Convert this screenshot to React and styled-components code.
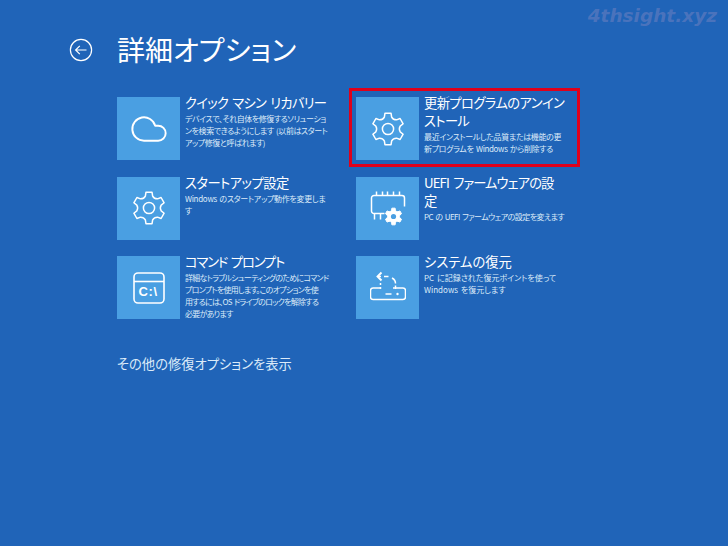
import React from 'react'
import styled, { createGlobalStyle } from 'styled-components'
import { Cloud } from 'lucide-react'

const GlobalStyle = createGlobalStyle`
  html, body {
    margin: 0;
    background: #2064b8;
  }
  body {
    font-family: "Noto Sans CJK JP", "Noto Sans", sans-serif;
    font-feature-settings: "palt";
    color: #fff;
  }
`

const Page = styled.div`
  position: relative;
  width: 728px;
  height: 546px;
  overflow: hidden;
  box-sizing: border-box;
  padding: 29px 0 0 69px;
  background: #2064b8;
`
const Watermark = styled.div`
  position: absolute;
  top: 5px;
  right: 11px;
  font-family: "DejaVu Sans", sans-serif;
  font-style: italic;
  font-weight: 700;
  font-size: 18.5px;
  color: rgba(128, 135, 195, 0.45);
`
const Header = styled.div`
  display: flex;
  align-items: center;
  gap: 24px;
  height: 42px;
`
const BackButton = styled.svg`
  width: 24px;
  height: 24px;
  flex: none;
`
const Title = styled.h1`
  margin: -2px 0 0;
  font-size: 28px;
  font-weight: 400;
  line-height: 42px;
`
const Grid = styled.div`
  display: grid;
  grid-template-columns: 239px 239px;
  grid-auto-rows: 63px;
  row-gap: 16.5px;
  margin: 26px 0 0 48px;
`
const Card = styled.div`
  position: relative;
  display: flex;
  gap: 5px;
  ${props => props.$highlighted && `
    &::after {
      content: "";
      position: absolute;
      top: -9px;
      right: 15px;
      bottom: -7px;
      left: -7px;
      border: 3px solid #e0001b;
    }
  `}
`
const Tile = styled.div`
  width: 63px;
  height: 63px;
  flex: none;
  display: flex;
  align-items: center;
  justify-content: center;
  background: #4a9fe2;
`
const CardText = styled.div`
  margin-top: -3px;
  white-space: nowrap;
`
const CardTitle = styled.div`
  font-size: 13.3px;
  line-height: 18px;
  color: #fff;
  word-spacing: 2px;
  letter-spacing: ${props => props.$tracking || 0}px;
`
const CardDesc = styled.div`
  margin-top: 1px;
  font-size: 8px;
  line-height: 12px;
  color: #dcebf9;
  word-spacing: 1px;
  letter-spacing: ${props => props.$tracking || 0}px;
`
const MoreLink = styled.div`
  margin: 35px 0 0 48px;
  font-size: 13.3px;
  line-height: 20px;
  color: #dcebf9;
`
const IconLabel = styled.text`
  font-family: "Liberation Sans", sans-serif;
  font-size: 13px;
  font-weight: 700;
  letter-spacing: 0.6px;
  fill: #fff;
  stroke: none;
`

// six flat teeth round a centre, top tooth pointing straight up
const gearPath = (cx, cy, outer, base, valley) => {
  const at = (r, deg) => {
    const rad = (deg * Math.PI) / 180
    return `${(cx + r * Math.cos(rad)).toFixed(2)} ${(cy + r * Math.sin(rad)).toFixed(2)}`
  }
  let d = ''
  for (let i = 0; i < 6; i++) {
    const a = i * 60 - 90
    d += `${i === 0 ? 'M' : 'L'}${at(base, a - 17)} L${at(outer, a - 11)} L${at(outer, a + 11)} L${at(base, a + 17)} Q${at(valley, a + 30)} `
    d += `${at(base, a + 43)} `
  }
  return d + 'Z'
}

const BackIcon = () => (
  <BackButton viewBox="0 0 24 24" fill="none" stroke="#fff" strokeWidth="1.2">
    <circle cx="12" cy="12" r="10.6" />
    <path d="M17.5 12H6.8M10.8 7.8 6.6 12l4.2 4.2" />
  </BackButton>
)

const GearIcon = () => (
  <svg width="36" height="36" viewBox="0 0 36 36" fill="none" stroke="#fff" strokeWidth="1.5" strokeLinejoin="round">
    <path d={gearPath(18, 18, 16, 12.5, 10.5)} />
    <circle cx="18" cy="18" r="5.6" />
  </svg>
)

const ChipIcon = () => (
  <svg width="36" height="36" viewBox="0 0 36 36" fill="none" stroke="#fff" strokeWidth="1.5">
    <path d="M14.5 23.5H4A2.5 2.5 0 0 1 1.5 21V8A2.5 2.5 0 0 1 4 5.5h28A2.5 2.5 0 0 1 34.5 8v8.5" />
    <path d="M6.5 1.5v4M12.5 1.5v4M17.5 1.5v4M23.5 1.5v4M29.5 1.5v4M4.5 23.5v6M10.5 23.5v6" />
    <path fill="#fff" strokeWidth="1" strokeLinejoin="round" d={gearPath(23.5, 26.5, 8.5, 6.5, 5.5)} />
    <circle cx="23.5" cy="26.5" r="2.6" fill="#4a9fe2" stroke="none" />
  </svg>
)

const CommandIcon = () => (
  <svg width="32" height="32" viewBox="0 0 32 32" fill="none" stroke="#fff" strokeWidth="1.6">
    <rect x="1" y="1" width="30" height="30" rx="4" />
    <path d="M1 9.5h30" />
    <IconLabel x="5.5" y="24">C:\</IconLabel>
  </svg>
)

const RestoreIcon = () => (
  <svg width="36" height="36" viewBox="0 0 36 36" fill="none" stroke="#fff" strokeWidth="1.5">
    <path d="M11 18H3a2.5 2.5 0 0 0-2.5 2.5V27A2.5 2.5 0 0 0 3 29.5h30a2.5 2.5 0 0 0 2.5-2.5v-6.5A2.5 2.5 0 0 0 33 18H23" />
    <path d="M15.5 24h6" />
    <circle cx="27.5" cy="24" r="1.2" fill="#fff" stroke="none" />
    <path d="M11.5 2.5 7.5 6.5l4 4" strokeWidth="1.9" />
    <path d="M8 6.5h3M14 6.5h4.5M22 8c2 1 3.5 3 3.5 5.5M25.5 15.5V19M10.5 13v2M10.5 17v2" />
  </svg>
)

const options = [
  {
    icon: <Cloud size={40} strokeWidth={1.15} color="#fff" />,
    title: ['クイック マシン リカバリー'],
    titleTracking: -0.75,
    desc: ['デバイスで、それ自体を修復するソリューショ', 'ンを検索できるようにします (以前はスタート', 'アップ修復と呼ばれます)'],
    descTracking: -0.45,
  },
  {
    icon: <GearIcon />,
    title: ['更新プログラムのアンイン', 'ストール'],
    titleTracking: -0.6,
    desc: ['最近インストールした品質または機能の更', '新プログラムを Windows から削除する'],
    descTracking: -0.35,
    highlighted: true,
  },
  {
    icon: <GearIcon />,
    title: ['スタートアップ設定'],
    titleTracking: -0.55,
    desc: ['Windows のスタートアップ動作を変更しま', 'す'],
    descTracking: -0.3,
  },
  {
    icon: <ChipIcon />,
    title: ['UEFI ファームウェアの設', '定'],
    titleTracking: -0.9,
    desc: ['PC の UEFI ファームウェアの設定を変えます'],
    descTracking: -0.55,
  },
  {
    icon: <CommandIcon />,
    title: ['コマンド プロンプト'],
    titleTracking: -1.2,
    desc: ['詳細なトラブルシューティングのためにコマンド', 'プロンプトを使用します。このオプションを使', '用するには、OS ドライブのロックを解除する', '必要があります'],
    descTracking: -0.75,
  },
  {
    icon: <RestoreIcon />,
    title: ['システムの復元'],
    desc: ['PC に記録された復元ポイントを使って', 'Windows を復元します'],
  },
]

const App = () => {
  return (
    <Page>
      <GlobalStyle />
      <Watermark>4thsight.xyz</Watermark>
      <Header>
        <BackIcon />
        <Title>詳細オプション</Title>
      </Header>
      <Grid>
        {options.map(option => (
          <Card key={option.title[0]} $highlighted={option.highlighted}>
            <Tile>{option.icon}</Tile>
            <CardText>
              {option.title.map(line => (
                <CardTitle key={line} $tracking={option.titleTracking}>{line}</CardTitle>
              ))}
              <CardDesc $tracking={option.descTracking}>
                {option.desc.map(line => (
                  <div key={line}>{line}</div>
                ))}
              </CardDesc>
            </CardText>
          </Card>
        ))}
      </Grid>
      <MoreLink>その他の修復オプションを表示</MoreLink>
    </Page>
  )
}

export default App
